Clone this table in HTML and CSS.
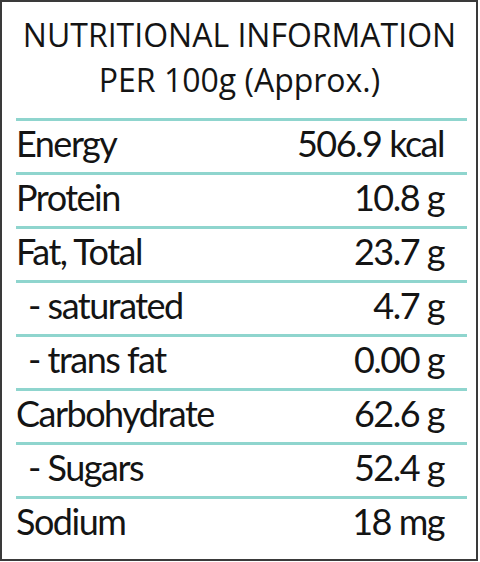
FILE: index.html
```html
<!DOCTYPE html>
<html>
<head>
<meta charset="utf-8">
<link rel="stylesheet" href="styles.css">
</head>
<body>
<div class="panel">
  <div class="title">
    <div class="title-line">NUTRITIONAL INFORMATION</div>
    <div class="title-line">PER 100g (Approx.)</div>
  </div>
  <div class="table">
    <div class="row"><span class="label">Energy</span><span class="value">506.9 kcal</span></div>
    <div class="row"><span class="label">Protein</span><span class="value">10.8 g</span></div>
    <div class="row"><span class="label">Fat, Total</span><span class="value">23.7 g</span></div>
    <div class="row"><span class="label sub">- saturated</span><span class="value">4.7 g</span></div>
    <div class="row"><span class="label sub">- trans fat</span><span class="value">0.00 g</span></div>
    <div class="row"><span class="label">Carbohydrate</span><span class="value">62.6 g</span></div>
    <div class="row"><span class="label sub">- Sugars</span><span class="value">52.4 g</span></div>
    <div class="row"><span class="label">Sodium</span><span class="value">18 mg</span></div>
  </div>
</div>
</body>
</html>
```
FILE: styles.css
```css
html, body {
  margin: 0;
  padding: 0;
  background: #ffffff;
}
.panel {
  box-sizing: border-box;
  width: 478px;
  height: 561px;
  border: 2px solid #3a3a3a;
  padding: 0 9px 0 14px;
  font-family: "Open Sans", sans-serif;
  color: #141414;
}
.title {
  height: 116px;
  box-sizing: border-box;
  padding-top: 10px;
  text-align: center;
  font-size: 32px;
  line-height: 45px;
  padding-right: 4px;
}
.table {
  display: flex;
  flex-direction: column;
}
.row {
  display: flex;
  justify-content: space-between;
  align-items: baseline;
  height: 54px;
  box-sizing: border-box;
  border-top: 3px solid #8fd5ce;
  font-family: "Lato", "Open Sans", sans-serif;
  font-size: 36px;
  letter-spacing: -1.5px;
  line-height: 44px;
  padding-right: 23px;
}
.sub {
  padding-left: 12px;
}
```
